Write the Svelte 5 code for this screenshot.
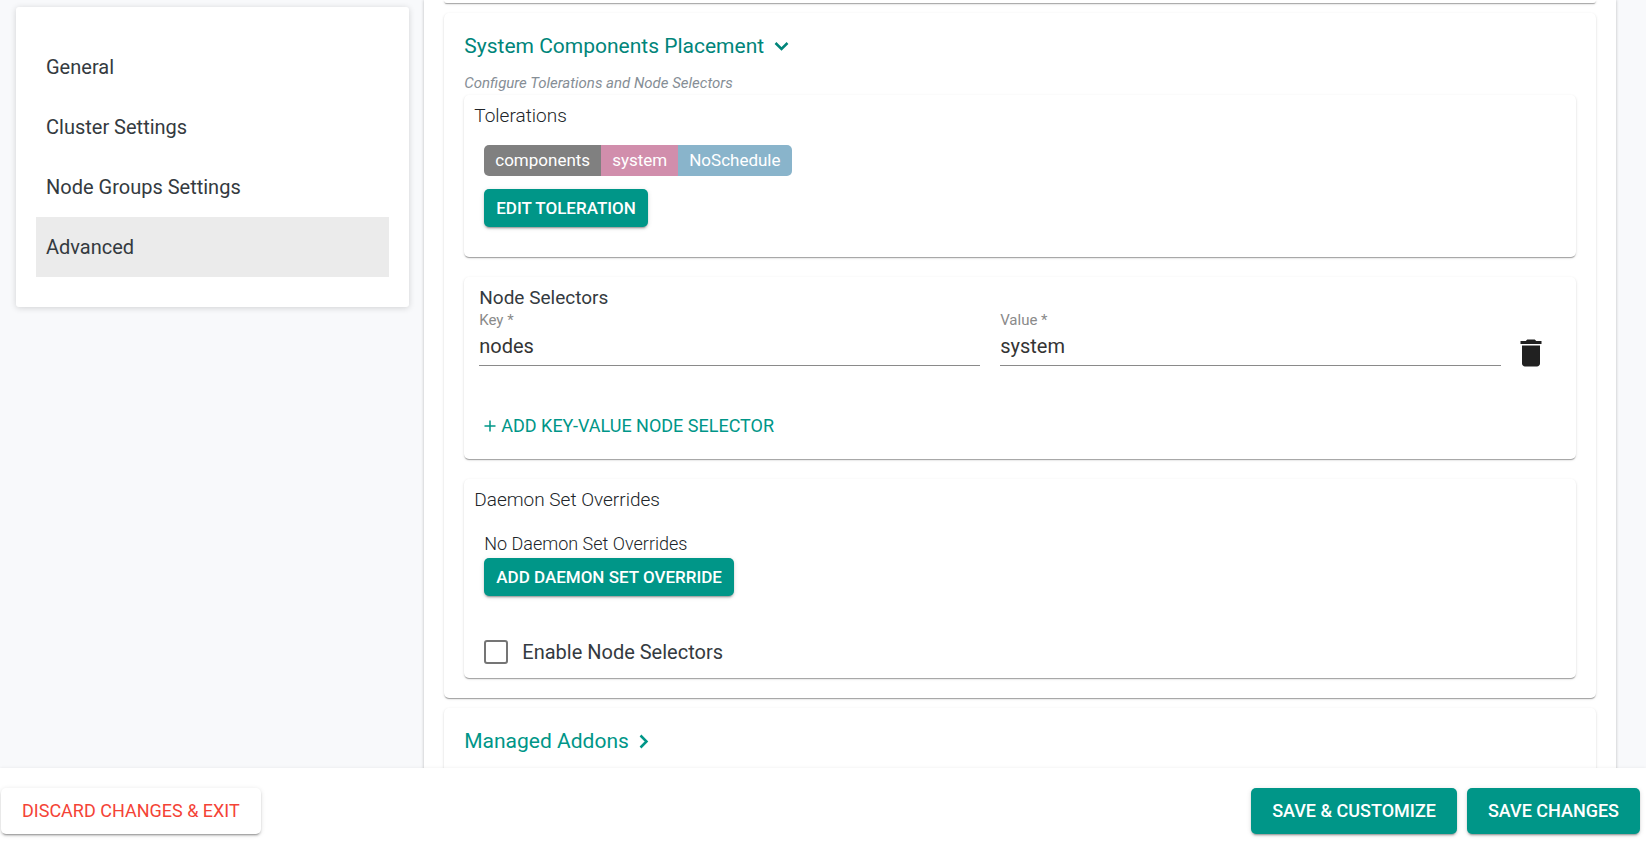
<script>
  let nav = ['General', 'Cluster Settings', 'Node Groups Settings', 'Advanced'];
  let active = 'Advanced';

  let toleration = { key: 'components', value: 'system', effect: 'NoSchedule' };
  let selectors = [{ key: 'nodes', value: 'system' }];
  let enableNodeSelectors = false;

  const addSelector = () => {
    selectors = [...selectors, { key: '', value: '' }];
  };

  const removeSelector = (index) => {
    selectors = selectors.filter((_, i) => i !== index);
  };
</script>

<div class="page">
  <div class="content">
    <nav class="sidebar">
      {#each nav as item}
        <a href="#{item}" class:active={item === active} on:click|preventDefault={() => (active = item)}>{item}</a>
      {/each}
    </nav>

    <main class="panel">
      <section class="card previous"></section>

      <section class="card">
        <button class="section-title open" type="button">
          System Components Placement
          <svg width="16" height="16" viewBox="0 0 16 16"><path d="M1.5 5l6 6 6-6" /></svg>
        </button>
        <p class="hint">Configure Tolerations and Node Selectors</p>

        <div class="card inner">
          <h3>Tolerations</h3>
          <div class="indent">
            <div class="tags">
              <span class="key">{toleration.key}</span>
              <span class="value">{toleration.value}</span>
              <span class="effect">{toleration.effect}</span>
            </div>
            <button class="btn small" type="button">Edit Toleration</button>
          </div>
        </div>

        <div class="card inner selectors">
          <h3>Node Selectors</h3>
          {#each selectors as selector, i}
            <div class="row">
              <div class="field">
                <label for="key-{i}">Key *</label>
                <input id="key-{i}" type="text" bind:value={selector.key} />
              </div>
              <div class="field">
                <label for="value-{i}">Value *</label>
                <input id="value-{i}" type="text" bind:value={selector.value} />
              </div>
              <button class="icon-btn" type="button" aria-label="Delete" on:click={() => removeSelector(i)}>
                <svg width="36" height="36" viewBox="0 0 24 24">
                  <path d="M6 19c0 1.1.9 2 2 2h8c1.1 0 2-.9 2-2V7H6v12zM19 4h-3.5l-1-1h-5l-1 1H5v2h14V4z" />
                </svg>
              </button>
            </div>
          {/each}
          <button class="add" type="button" on:click={addSelector}>
            <svg width="12" height="12" viewBox="0 0 12 12"><path d="M6 0.5v11M0.5 6h11" /></svg>
            Add Key-Value Node Selector
          </button>
        </div>

        <div class="card inner">
          <h3>Daemon Set Overrides</h3>
          <div class="indent">
            <p class="empty">No Daemon Set Overrides</p>
            <button class="btn small" type="button">Add Daemon Set Override</button>
            <label class="check">
              <input type="checkbox" bind:checked={enableNodeSelectors} />
              Enable Node Selectors
            </label>
          </div>
        </div>
      </section>

      <section class="card">
        <button class="section-title" type="button">
          Managed Addons
          <svg width="16" height="16" viewBox="0 0 16 16"><path d="M1.5 2.5l6 6-6 6" /></svg>
        </button>
      </section>
    </main>
  </div>

  <footer>
    <button class="btn discard" type="button">Discard Changes &amp; Exit</button>
    <button class="btn" type="button">Save &amp; Customize</button>
    <button class="btn" type="button">Save Changes</button>
  </footer>
</div>

<style>
  :global(body) {
    margin: 0;
    background: #f8f9fb;
    font-family: Roboto, "Liberation Sans", sans-serif;
    color: #212529;
  }

  .page,
  .page * {
    box-sizing: border-box;
  }

  .page {
    display: flex;
    flex-direction: column;
    height: 100vh;
  }

  .content {
    flex: 1;
    min-height: 0;
    overflow: hidden;
    display: grid;
    grid-template-columns: 33fr 100fr;
    align-items: start;
    gap: 15px;
    padding: 0 30px 0 16px;
  }

  button {
    font-family: inherit;
    border: none;
    cursor: pointer;
  }

  .sidebar {
    margin-top: 7px;
    padding: 30px 20px;
    background: #fff;
    border-radius: 3px;
    box-shadow: 0 1px 6px rgba(0, 0, 0, 0.16);
  }

  .sidebar a {
    display: block;
    padding: 0 10px;
    font-size: 20px;
    line-height: 60px;
    color: #343a40;
    text-decoration: none;
  }

  .sidebar a.active {
    background: #ebebeb;
  }

  .panel {
    display: flex;
    flex-direction: column;
    gap: 10px;
    padding: 0 20px 20px;
    background: #fff;
    box-shadow: 0 0 3px rgba(0, 0, 0, 0.25);
  }

  .card {
    padding: 20px;
    background: #fff;
    border-radius: 5px;
    box-shadow: 0 2px 1px -1px rgba(0, 0, 0, 0.2), 0 1px 1px rgba(0, 0, 0, 0.14), 0 1px 3px rgba(0, 0, 0, 0.12);
  }

  .card.previous {
    height: 3px;
    padding: 0;
    border-radius: 0 0 5px 5px;
  }

  .section-title {
    display: flex;
    align-items: center;
    gap: 10px;
    padding: 0;
    background: none;
    font-size: 21px;
    line-height: 26px;
    color: #009688;
  }

  .section-title.open {
    color: #00857a;
  }

  .section-title svg {
    fill: none;
    stroke: currentColor;
    stroke-width: 2.5;
  }

  .hint {
    margin: 12px 0 0;
    font-size: 15px;
    line-height: 24px;
    font-style: italic;
    color: #868e96;
  }

  .inner {
    padding: 10px 10px 30px;
  }

  .inner + .inner {
    margin-top: 20px;
  }

  .inner:last-child {
    padding-bottom: 10px;
  }

  h3 {
    margin: 0;
    font-size: 19px;
    line-height: 22px;
    font-weight: 300;
  }

  .selectors h3 {
    font-weight: 400;
    color: #343a40;
  }

  .indent {
    padding: 18px 10px 0;
  }

  .tags {
    display: flex;
    width: fit-content;
    margin-bottom: 13px;
    border-radius: 5px;
    overflow: hidden;
    font-size: 17px;
    line-height: 31px;
    color: #fff;
  }

  .tags span {
    padding: 0 11px;
  }

  .tags .key {
    background: #808080;
  }

  .tags .value {
    background: #d18eac;
  }

  .tags .effect {
    background: #89b4cb;
  }

  .btn {
    padding: 0 21px;
    background: #009688;
    border-radius: 5px;
    box-shadow: 0 3px 1px -2px rgba(0, 0, 0, 0.2), 0 2px 2px rgba(0, 0, 0, 0.14), 0 1px 5px rgba(0, 0, 0, 0.12);
    font-size: 18px;
    line-height: 46px;
    font-weight: 500;
    text-transform: uppercase;
    color: #fff;
  }

  .btn.small {
    display: block;
    padding: 0 12px;
    font-size: 17px;
    line-height: 38px;
  }

  .selectors {
    padding: 10px 15px 10px;
  }

  .row {
    display: flex;
    gap: 20px;
  }

  .field {
    flex: 1;
  }

  .field label {
    display: block;
    font-size: 15px;
    line-height: 22px;
    color: #8a8a8a;
  }

  .field input {
    display: block;
    width: 100%;
    height: 35px;
    padding: 0 0 4px;
    border: none;
    border-bottom: 1px solid #8a8a8a;
    background: none;
    font-family: inherit;
    font-size: 20px;
    color: #343434;
    outline: none;
  }

  .icon-btn {
    display: flex;
    margin: 26px 12px 0 -8px;
    padding: 0;
    background: none;
    fill: #212121;
  }

  .add {
    display: flex;
    align-items: center;
    gap: 5px;
    margin-top: 32px;
    padding: 0 5px;
    background: none;
    font-size: 18px;
    line-height: 46px;
    text-transform: uppercase;
    color: #009688;
  }

  .add svg {
    fill: none;
    stroke: currentColor;
    stroke-width: 1.5;
  }

  .empty {
    margin: 4px 0;
    font-size: 18px;
    line-height: 21px;
    font-weight: 300;
  }

  .check {
    display: flex;
    align-items: center;
    gap: 14px;
    width: fit-content;
    margin-top: 40px;
    font-size: 20px;
    line-height: 32px;
    color: #343a40;
  }

  .check input {
    appearance: none;
    width: 24px;
    height: 24px;
    margin: 0;
    border: 2px solid #757575;
    border-radius: 3px;
    background: #fff;
  }

  .check input:checked {
    background: #009688;
  }

  footer {
    display: flex;
    gap: 10px;
    padding: 20px 6px 12px 1px;
    background: #fff;
    box-shadow: 0 0 3px rgba(0, 0, 0, 0.08);
    position: relative;
  }

  .discard {
    margin-right: auto;
    background: #fff;
    font-weight: 400;
    color: #f44336;
  }
</style>
